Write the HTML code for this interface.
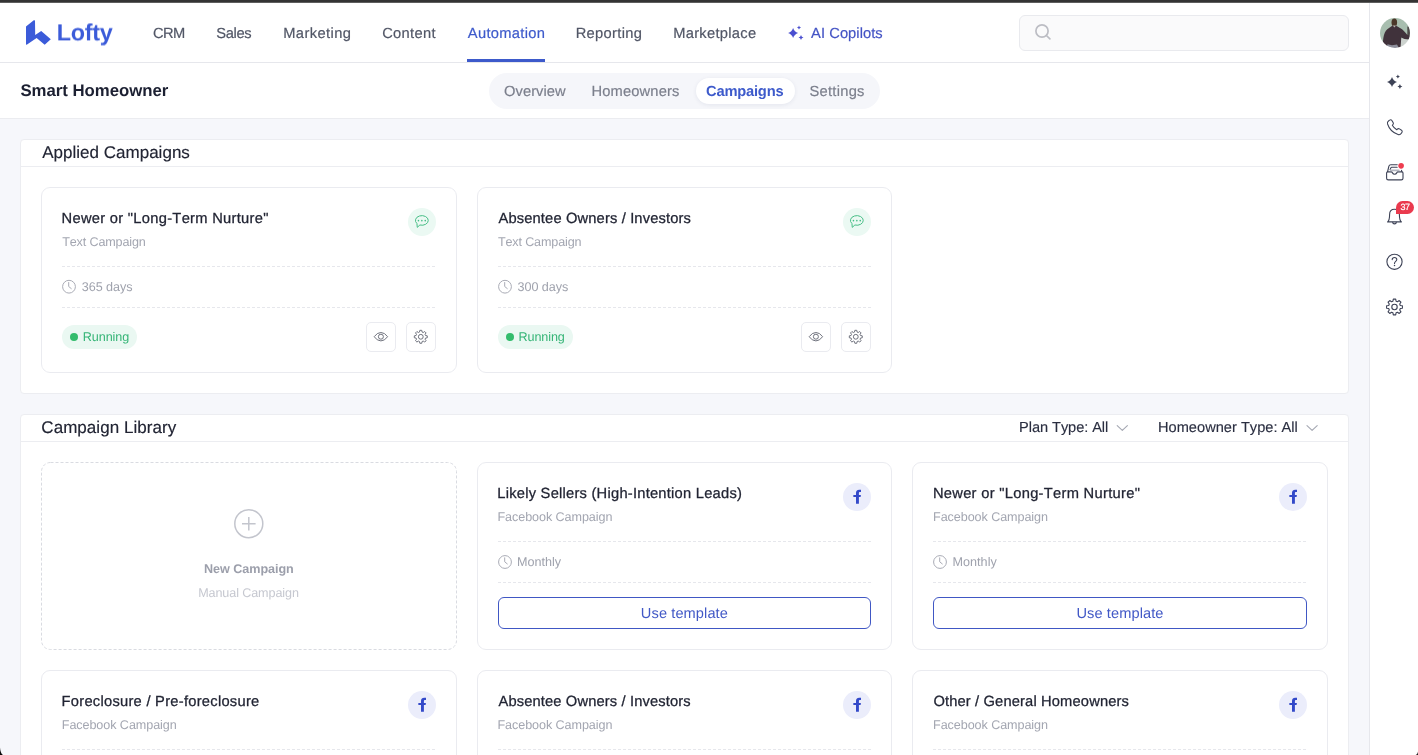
<!DOCTYPE html>
<html lang="en">
<head>
<meta charset="utf-8">
<title>Smart Homeowner - Campaigns</title>
<style>
*{box-sizing:border-box;margin:0;padding:0}
html,body{width:1418px;height:755px;overflow:hidden}
body{position:relative;background:#f6f7fb;font-family:"Liberation Sans",sans-serif;color:#202437;font-kerning:none}
.abs{position:absolute}
.t{position:absolute;white-space:nowrap;line-height:1;will-change:transform;text-rendering:geometricPrecision}
svg{position:absolute;overflow:visible}
.panel{position:absolute;background:#fff;border:1px solid #ecedf1;border-radius:4px}
.phead{position:absolute;border-bottom:1px solid #ecedf1}
.card{position:absolute;background:#fff;border:1px solid #eaebf0;border-radius:9px}
.dline{position:absolute;height:1px;background:repeating-linear-gradient(90deg,#e6e7ec 0,#e6e7ec 3px,transparent 3px,transparent 5px)}
.ibtn{position:absolute;width:30px;height:30px;border:1px solid #eaebf0;border-radius:5px;background:#fff}
.badge{position:absolute;height:24px;border-radius:12px;background:#eaf8f2}
.dot{position:absolute;width:8px;height:8px;border-radius:4px;background:#33bc6c}
.circ{position:absolute;width:28px;height:28px;border-radius:14px}
.ubtn{position:absolute;height:32px;border:1px solid #4057c4;border-radius:6px;background:#fff}
</style>
</head>
<body>
<div class="abs" style="left:0;top:0;width:1418px;height:3px;background:linear-gradient(#343434 0,#343434 2px,#5e5e5e 2px,#5e5e5e 3px)"></div>
<div class="abs" style="left:0;top:3px;width:1369px;height:60px;background:#fff;border-bottom:1px solid #e6e7ec"></div>
<div class="abs" style="left:0;top:63px;width:1369px;height:56px;background:#fff;border-bottom:1px solid #ebecf0"></div>
<div class="abs" style="left:1369px;top:3px;width:49px;height:752px;background:#fff;border-left:1px solid #e6e7ec"></div>
<svg style="left:0;top:0" width="60" height="60"><path d="M34.1 20.1 L26 26.5 V44.4 L26.7 44.8 L36.6 38.1 L44.7 44.8 L50.8 39.2 L41.2 31 L35.2 34.9 L35 20.8 Z" fill="#3b5bd9"/></svg>
<div class="t" style="left:56px;text-indent:0.63px;top:21px;font-size:23.4px;letter-spacing:-0.236px;color:#3b5bd9;font-weight:bold;transform:translateY(0.4px) rotate(0.001deg);">Lofty</div>
<div class="t" style="left:152px;text-indent:0.95px;top:27px;font-size:14.7px;letter-spacing:-0.537px;color:#515666;-webkit-text-stroke:0.2px #515666;">CRM</div>
<div class="t" style="left:216px;text-indent:0.23px;top:27px;font-size:14.7px;letter-spacing:-0.331px;color:#515666;-webkit-text-stroke:0.2px #515666;">Sales</div>
<div class="t" style="left:283px;text-indent:0.19px;top:27px;font-size:14.7px;letter-spacing:0.420px;color:#515666;-webkit-text-stroke:0.2px #515666;">Marketing</div>
<div class="t" style="left:382px;text-indent:0.15px;top:27px;font-size:14.7px;letter-spacing:0.320px;color:#515666;-webkit-text-stroke:0.2px #515666;">Content</div>
<div class="t" style="left:467px;text-indent:0.77px;top:27px;font-size:14.7px;letter-spacing:0.330px;color:#3d5acb;-webkit-text-stroke:0.2px #3d5acb;">Automation</div>
<div class="t" style="left:575px;text-indent:0.69px;top:27px;font-size:14.7px;letter-spacing:0.321px;color:#515666;-webkit-text-stroke:0.2px #515666;">Reporting</div>
<div class="t" style="left:673px;text-indent:0.19px;top:27px;font-size:14.7px;letter-spacing:0.294px;color:#515666;-webkit-text-stroke:0.2px #515666;">Marketplace</div>
<div class="t" style="left:811px;text-indent:0.07px;top:27px;font-size:14.7px;letter-spacing:0.063px;color:#4353c4;-webkit-text-stroke:0.2px #4353c4;">AI Copilots</div>
<div class="abs" style="left:467px;top:59px;width:78px;height:3px;background:#3d5acb"></div>
<svg style="left:0;top:0" width="10" height="10"><path d="M793.1 28.0 Q794.35 31.75 798.1 33 Q794.35 34.25 793.1 38.0 Q791.85 34.25 788.1 33 Q791.85 31.75 793.1 28.0 Z M799.0 25.4 Q799.378 27.122 801.1 27.5 Q799.378 27.878 799.0 29.6 Q798.622 27.878 796.9 27.5 Q798.622 27.122 799.0 25.4 Z M801.0 35.1 Q801.45 37.15 803.5 37.6 Q801.45 38.050000000000004 801.0 40.1 Q800.55 38.050000000000004 798.5 37.6 Q800.55 37.15 801.0 35.1 Z" fill="#4a4fd0"/></svg>
<div class="abs" style="left:1019px;top:15px;width:330px;height:36px;border:1px solid #e9eaee;border-radius:6px;background:#fafafb"></div>
<svg style="left:0;top:0" width="10" height="10"><circle cx="1042" cy="31" r="6.1" fill="none" stroke="#bcbdc4" stroke-width="1.7"/><path d="M1046.400 35.500 L1049.900 38.800" stroke="#bcbdc4" stroke-width="1.7" stroke-linecap="round"/></svg>
<div class="t" style="left:20px;text-indent:0.42px;top:83px;font-size:16.8px;letter-spacing:-0.025px;color:#1c2032;font-weight:bold;">Smart Homeowner</div>
<div class="abs" style="left:489px;top:73px;width:391px;height:36px;border-radius:18px;background:#f5f6fa"></div>
<div class="abs" style="left:696px;top:78px;width:99px;height:26px;border-radius:13px;background:#fff;box-shadow:0 1px 4px rgba(30,40,90,.08)"></div>
<div class="t" style="left:504px;text-indent:0.10px;top:85px;font-size:14.7px;letter-spacing:0.035px;color:#7b7f8c;-webkit-text-stroke:0.2px #7b7f8c;">Overview</div>
<div class="t" style="left:591px;text-indent:0.49px;top:85px;font-size:14.7px;letter-spacing:0.154px;color:#7b7f8c;-webkit-text-stroke:0.2px #7b7f8c;">Homeowners</div>
<div class="t" style="left:705px;text-indent:1.00px;top:85px;font-size:14.7px;letter-spacing:-0.197px;color:#3d5acb;font-weight:bold;">Campaigns</div>
<div class="t" style="left:809px;text-indent:0.43px;top:85px;font-size:14.7px;letter-spacing:0.276px;color:#7b7f8c;-webkit-text-stroke:0.2px #7b7f8c;">Settings</div>
<div class="panel" style="left:20px;top:139px;width:1329px;height:255px"></div>
<div class="phead" style="left:21px;top:140px;width:1327px;height:27px"></div>
<div class="t" style="left:42px;text-indent:0.17px;top:144px;font-size:17px;letter-spacing:0.017px;color:#212433;-webkit-text-stroke:0.15px #212433;">Applied Campaigns</div>
<div class="panel" style="left:20px;top:414px;width:1329px;height:400px"></div>
<div class="phead" style="left:21px;top:415px;width:1327px;height:27px"></div>
<div class="t" style="left:41px;text-indent:0.34px;top:419px;font-size:17px;letter-spacing:0.045px;color:#212433;-webkit-text-stroke:0.15px #212433;">Campaign Library</div>
<div class="t" style="left:1019px;text-indent:0.10px;top:421px;font-size:14.6px;letter-spacing:-0.065px;color:#2a2e40;-webkit-text-stroke:0.15px #2a2e40;">Plan Type: All</div>
<div class="t" style="left:1158px;text-indent:0.00px;top:421px;font-size:14.6px;letter-spacing:0.020px;color:#2a2e40;-webkit-text-stroke:0.15px #2a2e40;">Homeowner Type: All</div>
<svg style="left:0;top:0" width="10" height="10"><path d="M1117.2 425.6 L1122.3000000000002 430.3 L1127.4 425.6" fill="none" stroke="#a4a7b2" stroke-width="1.1" stroke-linecap="round" stroke-linejoin="round"/></svg>
<svg style="left:0;top:0" width="10" height="10"><path d="M1307 425.6 L1312.1 430.3 L1317.2 425.6" fill="none" stroke="#a4a7b2" stroke-width="1.1" stroke-linecap="round" stroke-linejoin="round"/></svg>
<div class="card" style="left:41px;top:187px;width:416px;height:186px"></div>
<div class="t" style="left:61px;text-indent:0.59px;top:212px;font-size:14.7px;letter-spacing:0.290px;color:#212433;-webkit-text-stroke:0.27px #212433;">Newer or "Long-Term Nurture"</div>
<div class="t" style="left:62px;text-indent:0.22px;top:236px;font-size:12.6px;letter-spacing:-0.149px;color:#a3a6b1;">Text Campaign</div>
<div class="circ" style="left:408px;top:208px;background:#ebf9f3"></div>
<svg style="left:0;top:0" width="10" height="10"><path d="M416.95 223.54 A6.4 4.8 0 1 1 419.87 225.01 L417.25 227.35 Z" fill="none" stroke="#45bd85" stroke-width="1" stroke-linejoin="round"/><circle cx="418.45000000000005" cy="220.64999999999998" r="0.8" fill="#45bd85"/><circle cx="421.85" cy="220.64999999999998" r="0.8" fill="#45bd85"/><circle cx="425.25" cy="220.64999999999998" r="0.8" fill="#45bd85"/></svg>
<div class="dline" style="left:62px;top:266px;width:374px"></div>
<svg style="left:0;top:0" width="10" height="10"><circle cx="69" cy="286.7" r="6.4" fill="none" stroke="#a9abb5" stroke-width="1"/><path d="M68.7 282.5 V286.5 L71.3 288.59999999999997" fill="none" stroke="#a9abb5" stroke-width="1" stroke-linecap="round" stroke-linejoin="round"/></svg>
<div class="t" style="left:81px;text-indent:0.82px;top:281px;font-size:12.6px;letter-spacing:-0.050px;color:#9fa2ad;">365 days</div>
<div class="dline" style="left:62px;top:307px;width:374px"></div>
<div class="badge" style="left:62px;top:325px;width:75px"></div>
<div class="dot" style="left:70px;top:333px"></div>
<div class="t" style="left:82px;text-indent:0.87px;top:331px;font-size:12.6px;letter-spacing:-0.107px;color:#36b577;">Running</div>
<div class="ibtn" style="left:366px;top:322px"></div>
<div class="ibtn" style="left:406px;top:322px"></div>
<svg style="left:0;top:0" width="10" height="10"><path d="M374.2 336.7 Q377.09999999999997 332.5 380.9 332.5 Q384.7 332.5 387.59999999999997 336.7 Q384.7 340.9 380.9 340.9 Q377.09999999999997 340.9 374.2 336.7 Z" fill="none" stroke="#6e717c" stroke-width="1"/><circle cx="380.9" cy="336.7" r="2.5" fill="none" stroke="#6e717c" stroke-width="1"/></svg>
<svg style="left:0;top:0" width="10" height="10"><path d="M419.51 332.07 L419.83 330.32 L421.77 330.32 L422.09 332.07 L423.23 332.54 L424.69 331.53 L426.07 332.91 L425.06 334.37 L425.53 335.51 L427.28 335.83 L427.28 337.77 L425.53 338.09 L425.06 339.23 L426.07 340.69 L424.69 342.07 L423.23 341.06 L422.09 341.53 L421.77 343.28 L419.83 343.28 L419.51 341.53 L418.37 341.06 L416.91 342.07 L415.53 340.69 L416.54 339.23 L416.07 338.09 L414.32 337.77 L414.32 335.83 L416.07 335.51 L416.54 334.37 L415.53 332.91 L416.91 331.53 L418.37 332.54 Z" fill="none" stroke="#6e717c" stroke-width="1" stroke-linejoin="round"/><circle cx="420.8" cy="336.8" r="2.4" fill="none" stroke="#6e717c" stroke-width="1"/></svg>
<div class="card" style="left:477px;top:187px;width:415px;height:186px"></div>
<div class="t" style="left:498px;text-indent:0.47px;top:212px;font-size:14.7px;letter-spacing:0.149px;color:#212433;-webkit-text-stroke:0.27px #212433;">Absentee Owners / Investors</div>
<div class="t" style="left:497px;text-indent:0.92px;top:236px;font-size:12.6px;letter-spacing:-0.149px;color:#a3a6b1;">Text Campaign</div>
<div class="circ" style="left:843px;top:208px;background:#ebf9f3"></div>
<svg style="left:0;top:0" width="10" height="10"><path d="M851.95 223.54 A6.4 4.8 0 1 1 854.87 225.01 L852.25 227.35 Z" fill="none" stroke="#45bd85" stroke-width="1" stroke-linejoin="round"/><circle cx="853.45" cy="220.64999999999998" r="0.8" fill="#45bd85"/><circle cx="856.85" cy="220.64999999999998" r="0.8" fill="#45bd85"/><circle cx="860.25" cy="220.64999999999998" r="0.8" fill="#45bd85"/></svg>
<div class="dline" style="left:498px;top:266px;width:373px"></div>
<svg style="left:0;top:0" width="10" height="10"><circle cx="505" cy="286.7" r="6.4" fill="none" stroke="#a9abb5" stroke-width="1"/><path d="M504.7 282.5 V286.5 L507.3 288.59999999999997" fill="none" stroke="#a9abb5" stroke-width="1" stroke-linecap="round" stroke-linejoin="round"/></svg>
<div class="t" style="left:517px;text-indent:0.52px;top:281px;font-size:12.6px;letter-spacing:-0.050px;color:#9fa2ad;">300 days</div>
<div class="dline" style="left:498px;top:307px;width:373px"></div>
<div class="badge" style="left:498px;top:325px;width:75px"></div>
<div class="dot" style="left:506px;top:333px"></div>
<div class="t" style="left:518px;text-indent:0.57px;top:331px;font-size:12.6px;letter-spacing:-0.107px;color:#36b577;">Running</div>
<div class="ibtn" style="left:801px;top:322px"></div>
<div class="ibtn" style="left:841px;top:322px"></div>
<svg style="left:0;top:0" width="10" height="10"><path d="M809.1999999999999 336.7 Q812.1 332.5 815.9 332.5 Q819.6999999999999 332.5 822.6 336.7 Q819.6999999999999 340.9 815.9 340.9 Q812.1 340.9 809.1999999999999 336.7 Z" fill="none" stroke="#6e717c" stroke-width="1"/><circle cx="815.9" cy="336.7" r="2.5" fill="none" stroke="#6e717c" stroke-width="1"/></svg>
<svg style="left:0;top:0" width="10" height="10"><path d="M854.51 332.07 L854.83 330.32 L856.77 330.32 L857.09 332.07 L858.23 332.54 L859.69 331.53 L861.07 332.91 L860.06 334.37 L860.53 335.51 L862.28 335.83 L862.28 337.77 L860.53 338.09 L860.06 339.23 L861.07 340.69 L859.69 342.07 L858.23 341.06 L857.09 341.53 L856.77 343.28 L854.83 343.28 L854.51 341.53 L853.37 341.06 L851.91 342.07 L850.53 340.69 L851.54 339.23 L851.07 338.09 L849.32 337.77 L849.32 335.83 L851.07 335.51 L851.54 334.37 L850.53 332.91 L851.91 331.53 L853.37 332.54 Z" fill="none" stroke="#6e717c" stroke-width="1" stroke-linejoin="round"/><circle cx="855.8" cy="336.8" r="2.4" fill="none" stroke="#6e717c" stroke-width="1"/></svg>
<svg style="left:0;top:0" width="10" height="10"><rect x="41.5" y="462.5" width="415" height="187" rx="9" fill="#fff" stroke="#d9dbe1" stroke-width="1" stroke-dasharray="3 2"/></svg>
<svg style="left:0;top:0" width="10" height="10"><circle cx="248.8" cy="523.7" r="14" fill="none" stroke="#c3c5cd" stroke-width="1.5"/><path d="M242 523.7 H255.6 M248.8 516.9 V530.5" stroke="#c3c5cd" stroke-width="1.5" fill="none"/></svg>
<div class="t" style="left:204px;text-indent:0.06px;top:563px;font-size:12.6px;letter-spacing:-0.049px;color:#9c9fab;font-weight:bold;">New Campaign</div>
<div class="t" style="left:198px;text-indent:0.17px;top:587px;font-size:12.6px;letter-spacing:-0.104px;color:#c6c8d0;">Manual Campaign</div>
<div class="card" style="left:477px;top:462px;width:415px;height:188px"></div>
<div class="t" style="left:497px;text-indent:0.29px;top:487px;font-size:14.7px;letter-spacing:0.240px;color:#212433;-webkit-text-stroke:0.27px #212433;">Likely Sellers (High-Intention Leads)</div>
<div class="t" style="left:497px;text-indent:0.47px;top:511px;font-size:12.6px;letter-spacing:-0.079px;color:#a3a6b1;">Facebook Campaign</div>
<div class="circ" style="left:843px;top:483px;background:#ebedfb"></div>
<svg style="left:0;top:0" width="10" height="10"><path d="M861.0 489.8 H859.3 C856.8 489.8 856.0 491.2 856.0 493.1 V494.9 H853.35 V497 H856.0 V503.7 H858.9 V497 H860.6 L860.9 494.9 H858.9 V493.4 C858.9 492.5 859.2 492.0 860.2 492.0 H861.0 Z" fill="#3349c9"/></svg>
<div class="dline" style="left:498px;top:541px;width:373px"></div>
<svg style="left:0;top:0" width="10" height="10"><circle cx="505" cy="562" r="6.4" fill="none" stroke="#a9abb5" stroke-width="1"/><path d="M504.7 557.8 V561.8 L507.3 563.9" fill="none" stroke="#a9abb5" stroke-width="1" stroke-linecap="round" stroke-linejoin="round"/></svg>
<div class="t" style="left:516px;text-indent:0.97px;top:556px;font-size:12.6px;letter-spacing:0.015px;color:#9fa2ad;">Monthly</div>
<div class="dline" style="left:498px;top:582px;width:373px"></div>
<div class="ubtn" style="left:498px;top:597px;width:373px"></div>
<div class="t" style="left:640px;text-indent:0.87px;top:607px;font-size:14.6px;letter-spacing:0.092px;color:#4158c6;">Use template</div>
<div class="card" style="left:912px;top:462px;width:416px;height:188px"></div>
<div class="t" style="left:932px;text-indent:0.89px;top:487px;font-size:14.7px;letter-spacing:0.298px;color:#212433;-webkit-text-stroke:0.27px #212433;">Newer or "Long-Term Nurture"</div>
<div class="t" style="left:933px;text-indent:0.07px;top:511px;font-size:12.6px;letter-spacing:-0.079px;color:#a3a6b1;">Facebook Campaign</div>
<div class="circ" style="left:1279px;top:483px;background:#ebedfb"></div>
<svg style="left:0;top:0" width="10" height="10"><path d="M1297.0 489.8 H1295.3 C1292.8 489.8 1292.0 491.2 1292.0 493.1 V494.9 H1289.35 V497 H1292.0 V503.7 H1294.9 V497 H1296.6 L1296.9 494.9 H1294.9 V493.4 C1294.9 492.5 1295.2 492.0 1296.2 492.0 H1297.0 Z" fill="#3349c9"/></svg>
<div class="dline" style="left:933px;top:541px;width:374px"></div>
<svg style="left:0;top:0" width="10" height="10"><circle cx="940" cy="562" r="6.4" fill="none" stroke="#a9abb5" stroke-width="1"/><path d="M939.7 557.8 V561.8 L942.3 563.9" fill="none" stroke="#a9abb5" stroke-width="1" stroke-linecap="round" stroke-linejoin="round"/></svg>
<div class="t" style="left:952px;text-indent:0.57px;top:556px;font-size:12.6px;letter-spacing:0.015px;color:#9fa2ad;">Monthly</div>
<div class="dline" style="left:933px;top:582px;width:374px"></div>
<div class="ubtn" style="left:933px;top:597px;width:374px"></div>
<div class="t" style="left:1076px;text-indent:0.47px;top:607px;font-size:14.6px;letter-spacing:0.092px;color:#4158c6;">Use template</div>
<div class="card" style="left:41px;top:670px;width:416px;height:188px"></div>
<div class="t" style="left:61px;text-indent:0.59px;top:695px;font-size:14.7px;letter-spacing:0.266px;color:#212433;-webkit-text-stroke:0.27px #212433;">Foreclosure / Pre-foreclosure</div>
<div class="t" style="left:61px;text-indent:0.77px;top:719px;font-size:12.6px;letter-spacing:-0.079px;color:#a3a6b1;">Facebook Campaign</div>
<div class="circ" style="left:408px;top:691px;background:#ebedfb"></div>
<svg style="left:0;top:0" width="10" height="10"><path d="M426.0 697.8 H424.3 C421.8 697.8 421.0 699.2 421.0 701.1 V702.9 H418.35 V705 H421.0 V711.7 H423.9 V705 H425.6 L425.9 702.9 H423.9 V701.4 C423.9 700.5 424.2 700.0 425.2 700.0 H426.0 Z" fill="#3349c9"/></svg>
<div class="dline" style="left:62px;top:749px;width:374px"></div>
<svg style="left:0;top:0" width="10" height="10"><circle cx="69" cy="770" r="6.4" fill="none" stroke="#a9abb5" stroke-width="1"/><path d="M68.7 765.8 V769.8 L71.3 771.9" fill="none" stroke="#a9abb5" stroke-width="1" stroke-linecap="round" stroke-linejoin="round"/></svg>
<div class="t" style="left:81px;text-indent:0.27px;top:764px;font-size:12.6px;letter-spacing:0.015px;color:#9fa2ad;">Monthly</div>
<div class="dline" style="left:62px;top:790px;width:374px"></div>
<div class="ubtn" style="left:62px;top:805px;width:374px"></div>
<div class="t" style="left:205px;text-indent:0.17px;top:815px;font-size:14.6px;letter-spacing:0.092px;color:#4158c6;">Use template</div>
<div class="card" style="left:477px;top:670px;width:415px;height:188px"></div>
<div class="t" style="left:498px;text-indent:0.47px;top:695px;font-size:14.7px;letter-spacing:0.137px;color:#212433;-webkit-text-stroke:0.27px #212433;">Absentee Owners / Investors</div>
<div class="t" style="left:497px;text-indent:0.47px;top:719px;font-size:12.6px;letter-spacing:-0.079px;color:#a3a6b1;">Facebook Campaign</div>
<div class="circ" style="left:843px;top:691px;background:#ebedfb"></div>
<svg style="left:0;top:0" width="10" height="10"><path d="M861.0 697.8 H859.3 C856.8 697.8 856.0 699.2 856.0 701.1 V702.9 H853.35 V705 H856.0 V711.7 H858.9 V705 H860.6 L860.9 702.9 H858.9 V701.4 C858.9 700.5 859.2 700.0 860.2 700.0 H861.0 Z" fill="#3349c9"/></svg>
<div class="dline" style="left:498px;top:749px;width:373px"></div>
<svg style="left:0;top:0" width="10" height="10"><circle cx="505" cy="770" r="6.4" fill="none" stroke="#a9abb5" stroke-width="1"/><path d="M504.7 765.8 V769.8 L507.3 771.9" fill="none" stroke="#a9abb5" stroke-width="1" stroke-linecap="round" stroke-linejoin="round"/></svg>
<div class="t" style="left:516px;text-indent:0.97px;top:764px;font-size:12.6px;letter-spacing:0.015px;color:#9fa2ad;">Monthly</div>
<div class="dline" style="left:498px;top:790px;width:373px"></div>
<div class="ubtn" style="left:498px;top:805px;width:373px"></div>
<div class="t" style="left:640px;text-indent:0.87px;top:815px;font-size:14.6px;letter-spacing:0.092px;color:#4158c6;">Use template</div>
<div class="card" style="left:912px;top:670px;width:416px;height:188px"></div>
<div class="t" style="left:933px;text-indent:0.40px;top:695px;font-size:14.7px;letter-spacing:0.147px;color:#212433;-webkit-text-stroke:0.27px #212433;">Other / General Homeowners</div>
<div class="t" style="left:933px;text-indent:0.07px;top:719px;font-size:12.6px;letter-spacing:-0.079px;color:#a3a6b1;">Facebook Campaign</div>
<div class="circ" style="left:1279px;top:691px;background:#ebedfb"></div>
<svg style="left:0;top:0" width="10" height="10"><path d="M1297.0 697.8 H1295.3 C1292.8 697.8 1292.0 699.2 1292.0 701.1 V702.9 H1289.35 V705 H1292.0 V711.7 H1294.9 V705 H1296.6 L1296.9 702.9 H1294.9 V701.4 C1294.9 700.5 1295.2 700.0 1296.2 700.0 H1297.0 Z" fill="#3349c9"/></svg>
<div class="dline" style="left:933px;top:749px;width:374px"></div>
<svg style="left:0;top:0" width="10" height="10"><circle cx="940" cy="770" r="6.4" fill="none" stroke="#a9abb5" stroke-width="1"/><path d="M939.7 765.8 V769.8 L942.3 771.9" fill="none" stroke="#a9abb5" stroke-width="1" stroke-linecap="round" stroke-linejoin="round"/></svg>
<div class="t" style="left:952px;text-indent:0.57px;top:764px;font-size:12.6px;letter-spacing:0.015px;color:#9fa2ad;">Monthly</div>
<div class="dline" style="left:933px;top:790px;width:374px"></div>
<div class="ubtn" style="left:933px;top:805px;width:374px"></div>
<div class="t" style="left:1076px;text-indent:0.47px;top:815px;font-size:14.6px;letter-spacing:0.092px;color:#4158c6;">Use template</div>
<svg style="left:1380px;top:18px" width="30" height="30" viewBox="0 0 30 30"><defs><clipPath id="av"><circle cx="15" cy="15" r="15"/></clipPath><filter id="avb" x="-10%" y="-10%" width="120%" height="120%"><feGaussianBlur stdDeviation="0.55"/></filter></defs>
<g clip-path="url(#av)"><g filter="url(#avb)"><rect x="-3" y="-3" width="36" height="36" fill="#a8beaf"/><rect x="27.300" y="8.500" width="2.700" height="12" fill="#4d4c4a"/>
<path d="M20.500 20 L30 22 V30 H20 Z" fill="#ccd2ce"/>
<ellipse cx="14.300" cy="4.400" rx="2.800" ry="3.900" fill="#4b3829"/>
<path d="M3 30 C2.500 20 4 12.500 9 10 L12.300 7.800 H16.200 L20 10 C23 11.500 25 14 27 16.500 L30 18 V21.500 L24.500 21 L21.300 19.500 L20.500 30 Z" fill="#40333a"/>
<path d="M12.800 7.400 L14.400 9.400 L16 7.400 Z" fill="#b9b3b0"/>
<path d="M7.500 26.300 L12 27.300 L17 26.500 L19 30 H6.500 Z" fill="#8d8e9b"/></g></g></svg>
<svg style="left:0;top:0" width="10" height="10"><path d="M1392 77.0 Q1393.25 80.75 1397.0 82 Q1393.25 83.25 1392 87.0 Q1390.75 83.25 1387.0 82 Q1390.75 80.75 1392 77.0 Z M1397.9 74.4 Q1398.278 76.122 1400.0 76.5 Q1398.278 76.878 1397.9 78.6 Q1397.5220000000002 76.878 1395.8000000000002 76.5 Q1397.5220000000002 76.122 1397.9 74.4 Z M1399.9 84.1 Q1400.3500000000001 86.14999999999999 1402.4 86.6 Q1400.3500000000001 87.05 1399.9 89.1 Q1399.45 87.05 1397.4 86.6 Q1399.45 86.14999999999999 1399.9 84.1 Z" fill="#3d4256"/></svg>
<svg style="left:1386px;top:118.5px" width="17" height="17" viewBox="0 0 24 24"><path d="M5.2 1.6 C6.3 0.9 7.6 1.2 8.3 2.2 L10.1 5.1 C10.7 6.1 10.5 7.3 9.7 8.1 L8.9 8.9 C10.4 11.6 12.5 13.7 15.2 15.2 L16 14.4 C16.8 13.6 18 13.4 19 14 L21.9 15.8 C22.9 16.5 23.2 17.8 22.5 18.9 L21.7 20.2 C20.7 21.8 18.8 22.5 17 21.9 C10 19.6 4.5 14.100 2.2 7.100 C1.600 5.300 2.300 3.400 3.900 2.400 Z" fill="none" stroke="#3d4256" stroke-width="1.45" stroke-linejoin="round"/></svg>
<svg style="left:0;top:0" width="10" height="10"><g fill="none" stroke="#3d4256" stroke-width="1.1" stroke-linejoin="round" stroke-linecap="round">
<path d="M1387.5 172 L1388.9 166.2 Q1389.3 164.7 1390.8 164.7 H1397.4"/>
<path d="M1390.1 169.6 L1390.9 167.8 Q1391.1 167.3 1391.7 167.3 H1397.2"/>
<path d="M1401.5 170.3 L1401.9 171.8"/>
<path d="M1386.6 173 Q1386.6 171.9 1387.7 171.9 H1391.6 C1392.4 171.9 1392.3 174.2 1394.6 174.2 C1396.900 174.2 1396.800 171.900 1397.600 171.900 H1401.900 Q1403 171.900 1403 173 V178.200 Q1403 179.900 1401.300 179.900 H1388.300 Q1386.600 179.900 1386.600 178.200 Z" fill="#fff"/></g>
<path d="M1390.2 169.500 H1399.200 L1399.900 171.300 H1389.600 Z" fill="#b5b8c2"/>
<circle cx="1401.100" cy="165.850" r="3.500" fill="#fff"/><circle cx="1401.100" cy="165.850" r="2.800" fill="#ee3d4f"/></svg>
<svg style="left:0;top:0" width="10" height="10"><g fill="none" stroke="#3d4256" stroke-width="1.1" stroke-linejoin="round" stroke-linecap="round">
<path d="M1387.600 221.900 C1389.600 220.300 1389.600 218.300 1389.600 214.400 C1389.600 211.100 1391.700 209.200 1394.500 209.200 C1397.300 209.200 1399.400 211.100 1399.400 214.400 C1399.400 218.300 1399.400 220.300 1401.400 221.900 Z"/>
<path d="M1392.700 222.200 C1392.700 224.400 1396.300 224.400 1396.300 222.200"/></g></svg>
<div class="abs" style="left:1396px;top:201px;width:18px;height:13px;border-radius:7px 7px 7px 0;background:#ea3a4e"></div>
<div class="t" style="left:1400px;text-indent:0.56px;top:203px;font-size:9px;letter-spacing:-0.665px;color:#fff;-webkit-text-stroke:0.2px #fff;">37</div>
<svg style="left:0;top:0" width="10" height="10"><circle cx="1394.500" cy="261.800" r="7.600" fill="none" stroke="#3d4256" stroke-width="1.1"/>
<path d="M1392.200 259.600 C1392.200 256.800 1396.800 256.800 1396.800 259.600 C1396.800 261.400 1394.500 261.400 1394.500 263.400" fill="none" stroke="#3d4256" stroke-width="1.1" stroke-linecap="round"/><circle cx="1394.500" cy="265.600" r="0.75" fill="#3d4256"/></svg>
<svg style="left:0;top:0" width="10" height="10"><path d="M1392.92 301.21 L1393.31 299.09 L1395.69 299.09 L1396.08 301.21 L1397.47 301.79 L1399.25 300.56 L1400.94 302.25 L1399.71 304.03 L1400.29 305.42 L1402.41 305.81 L1402.41 308.19 L1400.29 308.58 L1399.71 309.97 L1400.94 311.75 L1399.25 313.44 L1397.47 312.21 L1396.08 312.79 L1395.69 314.91 L1393.31 314.91 L1392.92 312.79 L1391.53 312.21 L1389.75 313.44 L1388.06 311.75 L1389.29 309.97 L1388.71 308.58 L1386.59 308.19 L1386.59 305.81 L1388.71 305.42 L1389.29 304.03 L1388.06 302.25 L1389.75 300.56 L1391.53 301.79 Z" fill="none" stroke="#3d4256" stroke-width="1.1" stroke-linejoin="round"/><circle cx="1394.5" cy="307" r="2.7" fill="none" stroke="#3d4256" stroke-width="1.1"/></svg>
<svg style="left:0;top:0" width="10" height="10"><path d="M0 747.4 C0.300 750.800 1 753.400 2.900 755 L0 755 Z" fill="#0a0a0a"/><path d="M1418 751.500 C1417.700 753.300 1417 754.400 1415.700 755 L1418 755 Z" fill="#222"/></svg>
</body>
</html>
